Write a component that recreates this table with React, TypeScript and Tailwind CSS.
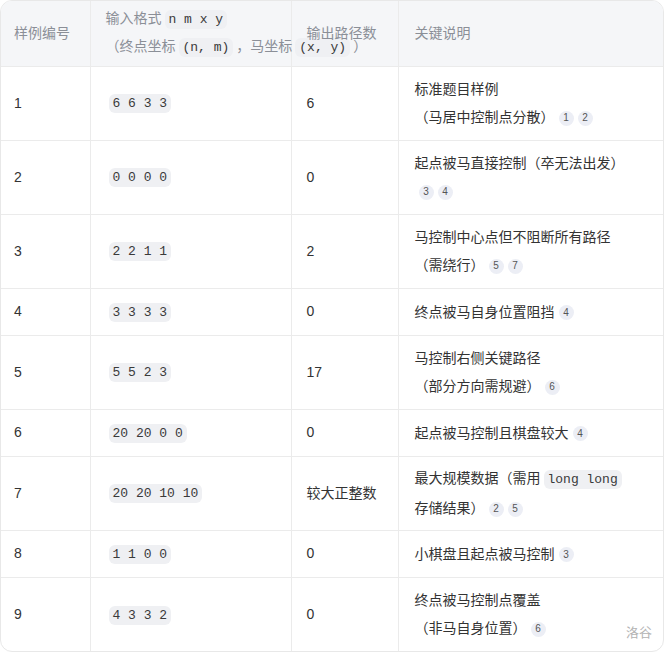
import React from 'react';

const Code: React.FC<{ children: React.ReactNode }> = ({ children }) => (
  <code className="mx-[3px] rounded-md bg-[#eff0f3] px-[4px] py-[2px] font-['Liberation_Mono',monospace] text-[13px] text-[#3a3a3a]">
    {children}
  </code>
);

const Cite: React.FC<{ n: number }> = ({ n }) => (
  <span className="ml-[4px] inline-flex h-[15px] w-[15px] items-center justify-center rounded-full bg-[#eceef5] align-[1px] text-[10px] leading-none text-[#555]">
    {n}
  </span>
);

interface Row {
  id: number;
  input: string;
  output: string;
  lines: React.ReactNode[];
  tall: boolean;
}

const rows: Row[] = [
  { id: 1, input: '6 6 3 3', output: '6', tall: true, lines: ['标准题目样例', <>（马居中控制点分散）<Cite n={1} /><Cite n={2} /></>] },
  { id: 2, input: '0 0 0 0', output: '0', tall: true, lines: ['起点被马直接控制（卒无法出发）', <><Cite n={3} /><Cite n={4} /></>] },
  { id: 3, input: '2 2 1 1', output: '2', tall: true, lines: ['马控制中心点但不阻断所有路径', <>（需绕行）<Cite n={5} /><Cite n={7} /></>] },
  { id: 4, input: '3 3 3 3', output: '0', tall: false, lines: [<>终点被马自身位置阻挡<Cite n={4} /></>] },
  { id: 5, input: '5 5 2 3', output: '17', tall: true, lines: ['马控制右侧关键路径', <>（部分方向需规避）<Cite n={6} /></>] },
  { id: 6, input: '20 20 0 0', output: '0', tall: false, lines: [<>起点被马控制且棋盘较大<Cite n={4} /></>] },
  { id: 7, input: '20 20 10 10', output: '较大正整数', tall: true, lines: [<>最大规模数据（需用<Code>long long</Code></>, <>存储结果）<Cite n={2} /><Cite n={5} /></>] },
  { id: 8, input: '1 1 0 0', output: '0', tall: false, lines: [<>小棋盘且起点被马控制<Cite n={3} /></>] },
  { id: 9, input: '4 3 3 2', output: '0', tall: true, lines: ['终点被马控制点覆盖', <>（非马自身位置）<Cite n={6} /></>] },
];

export default function App() {
  return (
    <div className="relative h-[654px] w-[665px] overflow-hidden bg-white font-['Liberation_Sans','Noto_Sans_CJK_SC',sans-serif] text-[14px] text-[#333]">
      <div className="w-[664px] overflow-hidden rounded-xl border border-[#e8e8e8]">
        <table className="w-full table-fixed border-collapse">
          <colgroup>
            <col className="w-[89px]" />
            <col className="w-[201px]" />
            <col className="w-[107px]" />
            <col />
          </colgroup>
          <thead>
            <tr className="h-[65px] bg-[#f5f6f8] text-left text-[#8b8f97]">
              <th className="pl-[13px] font-normal">样例编号</th>
              <th className="border-l border-[#ebebeb] pl-[15px] font-normal">
                <div className="whitespace-nowrap leading-[26px]">
                  <div>输入格式<Code>n m x y</Code></div>
                  <div>（终点坐标<Code>(n, m)</Code>，马坐标<Code>(x, y)</Code>）</div>
                </div>
              </th>
              <th className="border-l border-[#ebebeb] pl-[15px] font-normal">输出路径数</th>
              <th className="border-l border-[#ebebeb] pl-[16px] font-normal">关键说明</th>
            </tr>
          </thead>
          <tbody>
            {rows.map((r) => (
              <tr key={r.id} className={`border-t border-[#ebebeb] ${r.tall ? 'h-[74px]' : 'h-[47px]'}`}>
                <td className="pl-[13px]">{r.id}</td>
                <td className="border-l border-[#ebebeb] pl-[15px]">
                  <Code>{r.input}</Code>
                </td>
                <td className="border-l border-[#ebebeb] pl-[15px]">{r.output}</td>
                <td className="border-l border-[#ebebeb] pl-[16px] pr-2 leading-[28px]">
                  {r.lines.map((l, i) => (
                    <div key={i} className="whitespace-nowrap">{l}</div>
                  ))}
                </td>
              </tr>
            ))}
          </tbody>
        </table>
      </div>
      <span className="absolute bottom-[12px] right-[13px] text-[13px] text-[#b3b3b3]">洛谷</span>
    </div>
  );
}
